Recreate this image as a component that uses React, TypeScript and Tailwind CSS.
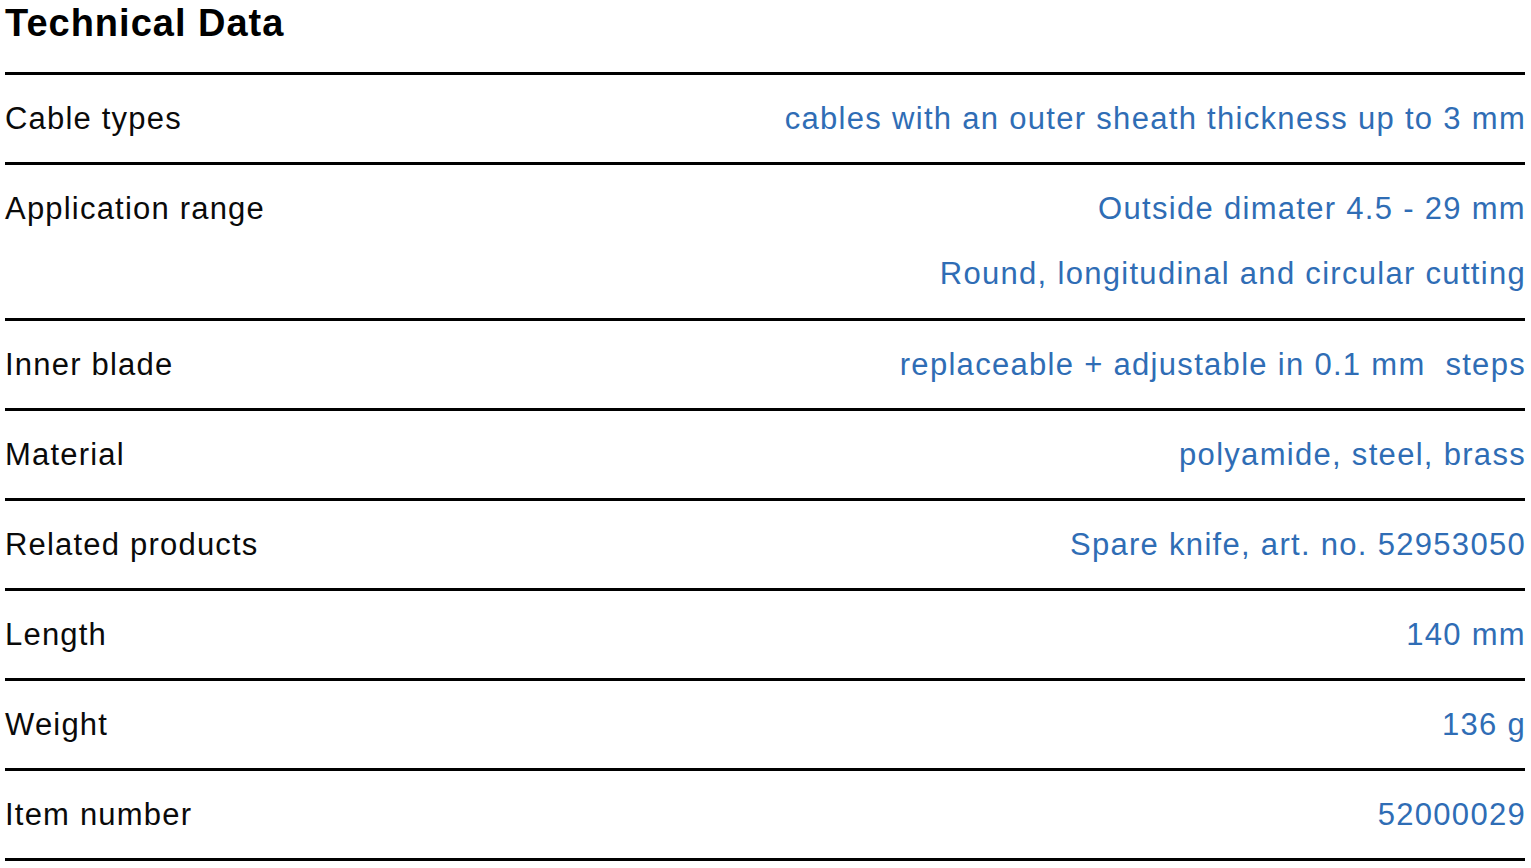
import React from "react";

const rows: { label: string; values: string[] }[] = [
  { label: "Cable types", values: ["cables with an outer sheath thickness up to 3 mm"] },
  { label: "Application range", values: ["Outside dimater 4.5 - 29 mm", "Round, longitudinal and circular cutting"] },
  { label: "Inner blade", values: ["replaceable + adjustable in 0.1 mm  steps"] },
  { label: "Material", values: ["polyamide, steel, brass"] },
  { label: "Related products", values: ["Spare knife, art. no. 52953050"] },
  { label: "Length", values: ["140 mm"] },
  { label: "Weight", values: ["136 g"] },
  { label: "Item number", values: ["52000029"] },
];

export default function App() {
  return (
    <div className="bg-white min-h-screen w-full" style={{ fontFamily: '"Liberation Sans", Arial, sans-serif' }}>
      <div className="ml-[5px] w-[1520px]">
        <h1 className="h-[72px] border-b-[3px] border-black text-[38px] font-bold leading-[46px] tracking-[1px] text-black box-content">
          Technical Data
        </h1>
        {rows.map((r) => (
          <div
            key={r.label}
            className={`flex justify-between border-b-[3px] border-black pt-[11px] ${r.values.length > 1 ? "pb-[12px]" : "pb-[11px]"}`}
          >
            <div className="text-[31px] leading-[65px] tracking-[1.2px] text-[#0a0a0a] whitespace-nowrap">{r.label}</div>
            <div className="flex flex-col items-end -mr-[1px]">
              {r.values.map((v) => (
                <div key={v} className="text-[31px] leading-[65px] tracking-[1.3px] text-[#2f6db5] whitespace-pre">
                  {v}
                </div>
              ))}
            </div>
          </div>
        ))}
      </div>
    </div>
  );
}
